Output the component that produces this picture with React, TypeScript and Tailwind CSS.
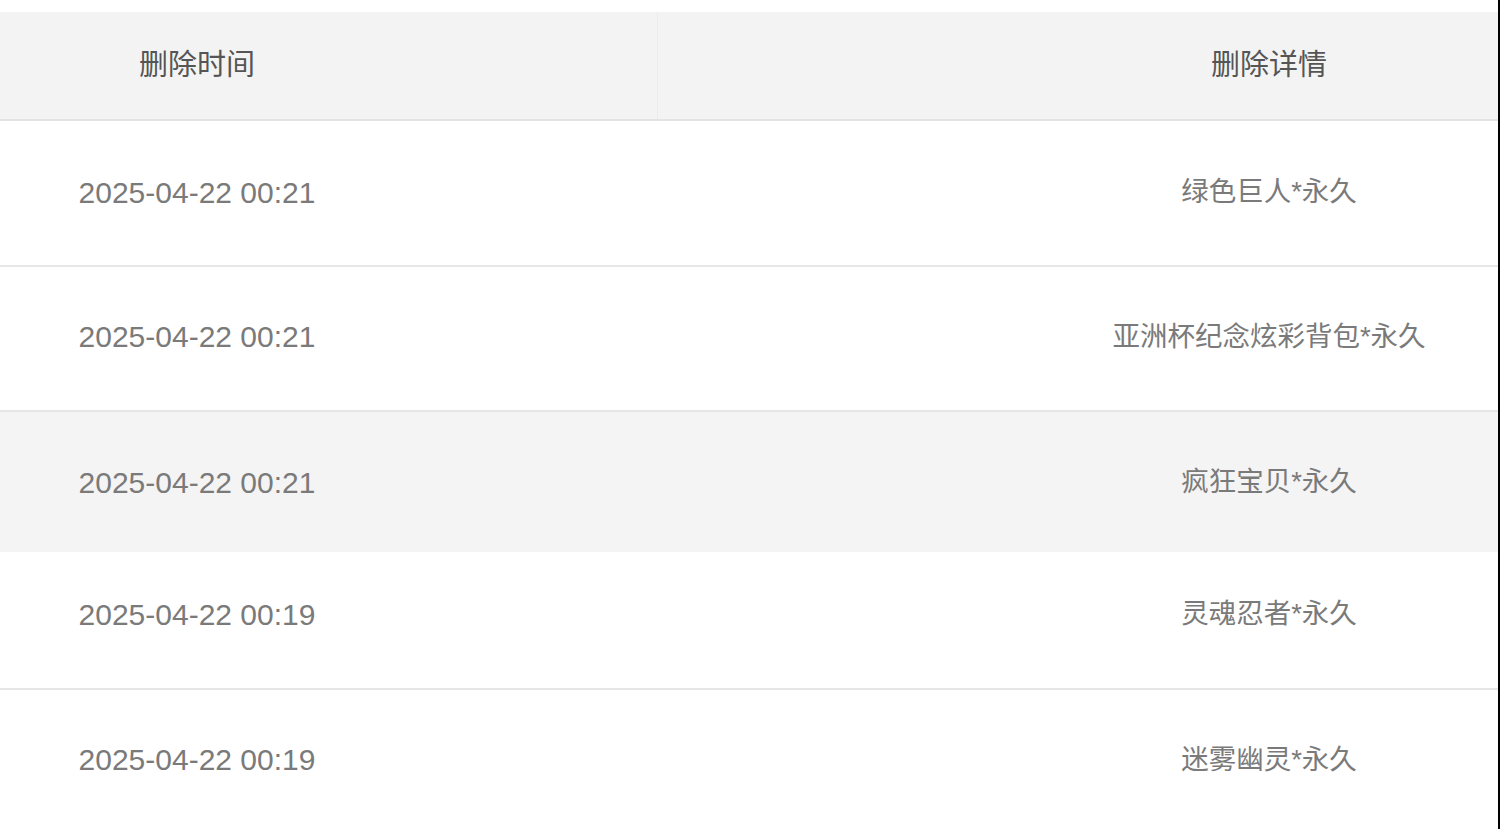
import React from 'react';

const rows = [
  { time: '2025-04-22 00:21', detail: '绿色巨人*永久', h: 'h-[146px] pb-[2px]', active: false, border: true },
  { time: '2025-04-22 00:21', detail: '亚洲杯纪念炫彩背包*永久', h: 'h-[145px] pb-[4px]', active: false, border: true },
  { time: '2025-04-22 00:21', detail: '疯狂宝贝*永久', h: 'h-[140px]', active: true, border: false },
  { time: '2025-04-22 00:19', detail: '灵魂忍者*永久', h: 'h-[138px] pb-[12px]', active: false, border: true },
  { time: '2025-04-22 00:19', detail: '迷雾幽灵*永久', h: 'h-[139px]', active: false, border: false },
];

export default function App() {
  return (
    <div
      className="w-[1500px] h-[829px] overflow-hidden bg-white border-r-2 border-black pt-[12px]"
      style={{ fontFamily: '"Liberation Sans", "Noto Sans CJK SC", sans-serif' }}
    >
      {/* 表头 */}
      <div className="grid grid-cols-[394px_264px_1fr_458px] h-[109px] bg-[#f3f3f3] border-b-2 border-[#e3e3e3]">
        <div className="flex items-center justify-center text-[29px] text-[#555]">删除时间</div>
        <div className="border-r border-[#ececec]" />
        <div />
        <div className="flex items-center justify-center text-[29px] text-[#555]">删除详情</div>
      </div>

      {/* 列表 */}
      {rows.map((row, i) => (
        <div
          key={i}
          className={`grid grid-cols-[394px_1fr_458px] ${row.h} ${row.active ? 'bg-[#f4f4f4]' : 'bg-white'} ${row.border ? 'border-b-2 border-[#e6e6e6]' : ''}`}
        >
          <div className="flex items-center justify-center text-[30px] text-[#7a7a7a]">{row.time}</div>
          <div />
          <div className="flex items-center justify-center text-[27.5px] text-[#7a7a7a]">{row.detail}</div>
        </div>
      ))}
    </div>
  );
}
